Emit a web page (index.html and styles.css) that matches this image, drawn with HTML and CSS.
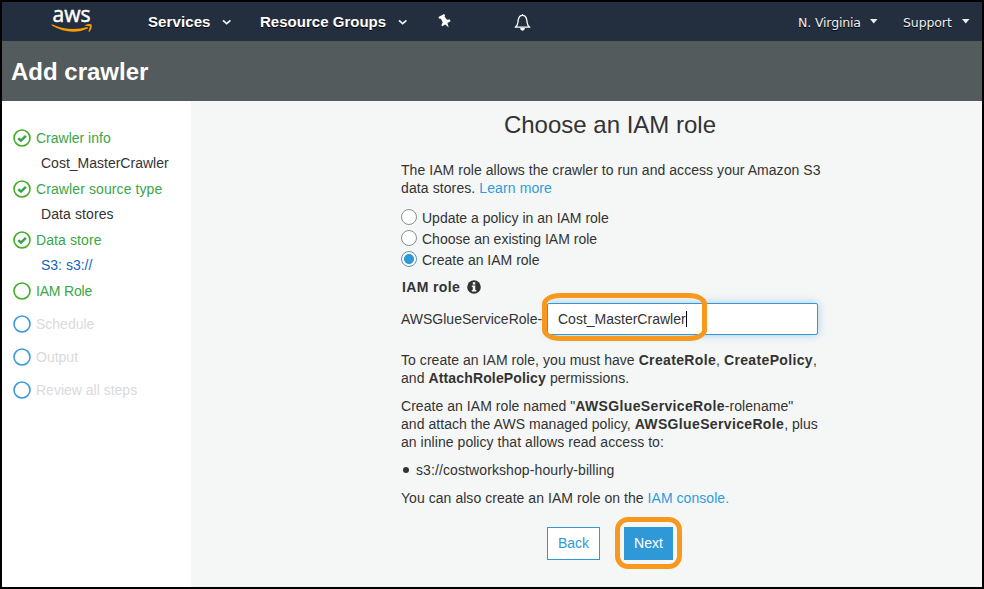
FILE: index.html
```html
<!DOCTYPE html>
<html lang="en">
<head>
<meta charset="utf-8">
<title>Add crawler</title>
<link rel="stylesheet" href="styles.css">
</head>
<body>
<div class="window">
  <header class="topnav">
    <svg class="logo" viewBox="0 0 42 32" width="42" height="32" role="img" aria-label="aws">
      <text x="1.5" y="18" textLength="38" lengthAdjust="spacingAndGlyphs" class="logo-text">aws</text>
      <path d="M.8 21.6Q20 32.5 37.3 24.2L36.2 22.9Q19.5 28.2 1.5 20.4Q-.3 20.2.8 21.6Z" fill="#f90"/>
      <path d="M33.6 21.5Q37.2 19.3 40.7 20.4Q41.2 24.6 38.2 28L37.4 27.6L39 22.2Z" fill="#f90"/>
    </svg>
    <nav class="menus">
      <span class="menu services">Services</span>
      <svg class="chev" viewBox="0 0 10 7" width="10" height="7"><path d="M1 1.3 4.7 4.6 8.4 1.3"/></svg>
      <span class="menu groups">Resource Groups</span>
      <svg class="chev" viewBox="0 0 10 7" width="10" height="7"><path d="M1 1.3 4.7 4.6 8.4 1.3"/></svg>
    </nav>
    <svg class="pin" viewBox="0 0 13 14" width="13" height="14"><path d="M.5 3 6 0 7.1 1.2 6.5 2.6 9 5.8 11.9 5.5 12.5 7.2 9.4 9.1 10.7 13.4 7.3 10.5 4.1 12.3 3.4 10.9 4.7 8.4 2.9 4.7 1 4.5Z" fill="#fff"/></svg>
    <svg class="bell" viewBox="0 0 17 19" width="17" height="19"><path d="M8.5 1V2.5M1.2 14.2H15.8C12.8 12.4 13.3 10.2 12.8 7.2C12.3 4.1 10.8 2.3 8.5 2.3S4.7 4.1 4.2 7.2C3.7 10.2 4.2 12.4 1.2 14.2Z" fill="none" stroke="#fff" stroke-width="1.3" stroke-linejoin="round"/><path d="M6 15H11Q10.5 17.8 8.5 17.8T6 15Z" fill="#fff"/></svg>
    <div class="account">
      <span class="region">N. Virginia</span>
      <svg class="caret" viewBox="0 0 8 5" width="8" height="5"><path d="M0 0H7.5L3.75 4.5Z"/></svg>
      <span class="support">Support</span>
      <svg class="caret" viewBox="0 0 8 5" width="8" height="5"><path d="M0 0H7.5L3.75 4.5Z"/></svg>
    </div>
  </header>
  <div class="titlebar"><h1><span>Add crawler</span></h1></div>
  <div class="body">
    <aside class="steps">
      <div class="step done"><svg class="ring" viewBox="0 0 18 18"><circle cx="9" cy="9" r="8"/><path d="M5.3 9.2 8 11.6 12.9 6.9"/></svg><span>Crawler info</span></div>
      <div class="detail"><span>Cost_MasterCrawler</span></div>
      <div class="step done"><svg class="ring" viewBox="0 0 18 18"><circle cx="9" cy="9" r="8"/><path d="M5.3 9.2 8 11.6 12.9 6.9"/></svg><span class="wide">Crawler source type</span></div>
      <div class="detail"><span class="wide">Data stores</span></div>
      <div class="step done"><svg class="ring" viewBox="0 0 18 18"><circle cx="9" cy="9" r="8"/><path d="M5.3 9.2 8 11.6 12.9 6.9"/></svg><span class="wide">Data store</span></div>
      <div class="detail path"><span>S3: s3://</span></div>
      <div class="step current"><svg class="ring" viewBox="0 0 18 18"><circle cx="9" cy="9" r="8"/></svg><span class="narrow">IAM Role</span></div>
      <div class="step todo"><svg class="ring" viewBox="0 0 18 18"><circle cx="9" cy="9" r="8"/></svg><span>Schedule</span></div>
      <div class="step todo"><svg class="ring" viewBox="0 0 18 18"><circle cx="9" cy="9" r="8"/></svg><span>Output</span></div>
      <div class="step todo"><svg class="ring" viewBox="0 0 18 18"><circle cx="9" cy="9" r="8"/></svg><span>Review all steps</span></div>
    </aside>
    <main class="main">
      <h2><span>Choose an IAM role</span></h2>
      <div class="form">
        <p>The IAM role allows the crawler to run and access your Amazon S3<br><span class="wide">data stores. <a>Learn more</a></span></p>
        <div class="options">
          <label class="option"><i class="radio"></i><span>Update a policy in an IAM role</span></label>
          <label class="option"><i class="radio"></i><span>Choose an existing IAM role</span></label>
          <label class="option"><i class="radio on"></i><span>Create an IAM role</span></label>
        </div>
        <div class="label"><b>IAM role</b><svg viewBox="0 0 14 14" width="14" height="14"><circle cx="7" cy="7" r="6.8" fill="#333"/><path d="M5.8 2.2H8.3V4.4H5.8ZM4.8 5.6H8.3V10H9.3V11.4H4.8V10H5.8V7H4.8Z" fill="#f4f7f6"/></svg></div>
        <div class="field">
          <span class="prefix">AWSGlueServiceRole-</span>
          <div class="input"><span>Cost_MasterCrawler</span><i class="cursor"></i></div>
          <div class="mark mark-input"></div>
        </div>
        <p class="perms">To create an IAM role, you must have <b>CreateRole</b>, <b>CreatePolicy</b>,<br>and <b class="attach">AttachRolePolicy</b> permissions.</p>
        <p>Create an IAM role named "<b>AWSGlueServiceRole</b>-rolename"<br>and attach the AWS managed policy, <b>AWSGlueServiceRole</b>, plus<br>an inline policy that allows read access to:</p>
        <ul><li><span class="wide">s3://costworkshop-hourly-billing</span></li></ul>
        <p>You can also create an IAM role on the <a>IAM console.</a></p>
        <div class="buttons">
          <div class="btn back">Back</div>
          <div class="btn next">Next<div class="mark mark-next"></div></div>
        </div>
      </div>
    </main>
  </div>
</div>
</body>
</html>
```
FILE: styles.css
```css
* { box-sizing: border-box; }
body { margin: 0; font: 14px/18px "Liberation Sans", Arial, sans-serif; color: #333; }
svg { display: block; flex: none; }
h1, h2, p, ul { margin: 0; padding: 0; }
.window { width: 984px; height: 589px; border: 2px solid #000; display: flex; flex-direction: column; background: #f4f7f6; overflow: hidden; }

.topnav { height: 39px; flex: none; background: #232f3e; display: flex; align-items: center; padding-left: 49px; color: #fff; }
.logo { margin-top: -3px; overflow: visible; }
.logo-text { font: 22px "Open Sans", sans-serif; fill: #fff; stroke: #fff; stroke-width: .5px; }
.menus { display: flex; align-items: center; margin-left: 55px; }
.menu { font-weight: bold; font-size: 15px; white-space: nowrap; text-shadow: 0 1px 0 #000; }
.services { width: 74px; letter-spacing: .1px; }
.groups { width: 138px; margin-left: 28px; letter-spacing: .02px; }
.chev { margin-top: 2px; }
.chev path { fill: none; stroke: #eee; stroke-width: 1.8; }
.pin { margin-left: 30px; margin-top: -1px; }
.bell { margin-left: 63px; margin-top: 1px; }
.account { margin-left: auto; margin-right: 12px; display: flex; align-items: center; font: 12.5px/18px "DejaVu Sans", Verdana, sans-serif; color: #eee; padding-top: 2px; white-space: nowrap; text-shadow: 0 1px 0 #000; }
.region { width: 72px; letter-spacing: -.14px; }
.support { width: 59px; margin-left: 25px; letter-spacing: -.1px; }
.caret { margin-top: -2px; }
.caret path { fill: #eee; }

.titlebar { height: 60px; flex: none; background: #545b5d; display: flex; align-items: center; padding: 2px 0 0 9px; }
h1 { font-size: 24px; line-height: 28px; color: #fff; }

.body { flex: 1; display: flex; }
.steps { width: 189px; flex: none; background: #fff; padding: 24px 0 0 11px; }
.step { display: flex; align-items: center; gap: 5px; height: 26px; color: #3aa648; }
.ring { width: 18px; height: 18px; fill: none; stroke: #43ac28; stroke-width: 1.6; }
.ring path { stroke: #31a844; stroke-width: 2.6; }
.detail { height: 25px; line-height: 25px; padding-left: 28px; }
.path { color: #1166bb; }
.todo { margin-top: 7px; color: #d9dadb; }
.todo .ring { stroke: #3b9bdc; }
.wide { letter-spacing: .1px; }
.narrow { letter-spacing: -.2px; }

.main { flex: 1; }
h2 { font-weight: normal; font-size: 24px; line-height: 30px; text-align: center; margin: 9px 0 0 47px; }
.form { width: 430px; margin: 21px 0 0 210px; white-space: nowrap; }
.form p { margin-bottom: 10px; letter-spacing: .05px; }
a { color: #2f9bdb; }
.options { padding-top: 1px; }
.option { display: flex; gap: 5px; height: 21px; align-items: flex-start; line-height: 21px; }
.radio { width: 16px; height: 16px; flex: none; border: 1px solid #8b8f90; border-radius: 50%; background: #fff; margin-top: 1px; }
.on { border-color: #5e91ac; background: radial-gradient(circle, #2f99d8 4.6px, #fff 5.4px); }
.label { display: flex; gap: 7px; align-items: center; height: 18px; margin: 7px 0 0 1px; }
.field { position: relative; display: flex; align-items: center; height: 32px; margin-top: 7px; }
.prefix { width: 146px; }
.input { width: 271px; height: 32px; border: 1px solid #3299d6; border-radius: 2px; background: #fff; display: flex; align-items: center; padding-left: 10px; box-shadow: 0 0 8px #a5c9ee; }
.cursor { width: 1px; height: 16px; background: #000; }
.mark { position: absolute; border: 5px solid #f8981d; }
.mark-input { left: 141px; top: -10px; width: 165px; height: 48px; border-radius: 18px / 11px; }
.perms { padding-top: 16px; }
b { letter-spacing: .35px; }
.attach { letter-spacing: .15px; }
ul { list-style: none; height: 18px; margin-bottom: 10px; }
li { display: flex; align-items: center; gap: 7px; padding-left: 2px; }
li::before { content: ""; width: 6px; height: 6px; border-radius: 50%; background: #333; }
.buttons { display: flex; gap: 24px; margin: 20px 0 0 146px; }
.btn { height: 33px; line-height: 33px; text-align: center; }
.back { width: 53px; border: 1px solid #2f99d8; background: #fff; color: #2f99d8; line-height: 31px; }
.next { position: relative; width: 49px; background: #2f99d8; color: #fff; }
.mark-next { left: -9px; top: -10px; width: 67px; height: 52px; border-radius: 13px; }
```
